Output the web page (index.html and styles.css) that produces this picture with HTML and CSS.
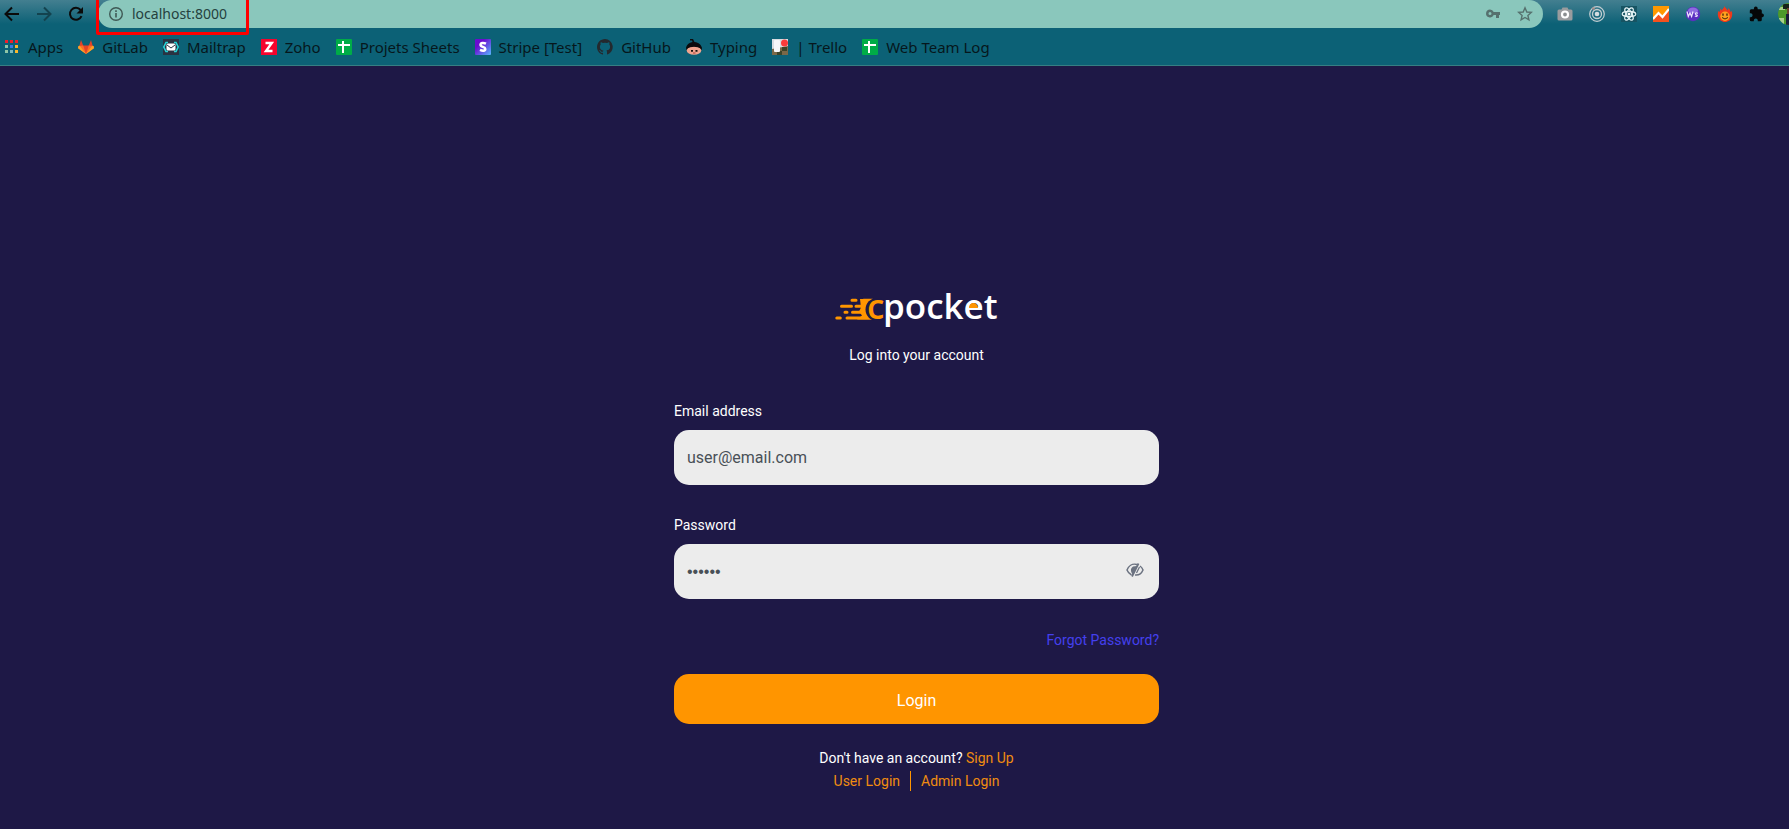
FILE: index.html
```html
<!DOCTYPE html>
<html lang="en">
<head>
<meta charset="utf-8">
<meta name="viewport" content="width=device-width, initial-scale=1">
<title>cpocket – Login</title>
<link rel="stylesheet" href="styles.css">
</head>
<body>
<header class="browser">
  <div class="toolbar">
    <nav class="nav-buttons" aria-label="History">
      <button class="icon-button" type="button" aria-label="Back"><svg viewBox="0 0 16 16"><path d="M15 8H2M8 1.500 1.500 8 8 14.500" fill="none" stroke="#0a0a0a" stroke-width="2"/></svg></button>
      <button class="icon-button" type="button" aria-label="Forward"><svg viewBox="0 0 16 16"><path d="M1 8h13M8 1.500 14.500 8 8 14.500" fill="none" stroke="#13434f" stroke-width="2"/></svg></button>
      <button class="icon-button" type="button" aria-label="Reload"><svg viewBox="0 0 16 16"><path d="M13.500 10.200A6 6 0 1 1 12.600 4" fill="none" stroke="#0a0a0a" stroke-width="2"/><path d="M15 1v6.500H8.500z" fill="#0a0a0a"/></svg></button>
    </nav>
    <div class="omnibox">
      <svg class="icon" viewBox="0 0 16 16"><circle cx="8" cy="8" r="6.300" fill="none" stroke="#3f5955" stroke-width="1.400"/><path d="M8 7v4.500M8 4.300v1.600" stroke="#3f5955" stroke-width="1.600"/></svg>
      <input class="address" type="text" value="localhost:8000" aria-label="Address">
      <span class="omnibox-actions">
        <button class="icon-button" type="button" aria-label="Saved passwords"><svg viewBox="0 0 16 16"><path fill="#56716e" fill-rule="evenodd" d="M5 3.500a4 4 0 1 0 3.700 5.600H11V12h3V9.100h1V6H8.700A4 4 0 0 0 5 3.500zM5 6a1.500 1.500 0 1 1 0 3 1.500 1.500 0 0 1 0-3z"/></svg></button>
        <button class="icon-button" type="button" aria-label="Bookmark"><svg viewBox="0 0 16 16"><path d="M8 1.800 9.800 6l4.500.4-3.400 3 1 4.500L8 11.500l-3.900 2.400 1-4.500-3.400-3L6.200 6z" fill="none" stroke="#56716e" stroke-width="1.400"/></svg></button>
      </span>
    </div>
    <div class="extensions">
      <button class="icon-button" type="button" aria-label="Screenshot"><svg viewBox="0 0 16 16"><path d="M2 3.500h2.500l1-2h5l1 2H14q1.500 0 1.500 1.500v8q0 1.500-1.500 1.500H2Q.5 14.500.5 13V5Q.5 3.500 2 3.500z" fill="#9a9c9e"/><circle cx="8" cy="8.500" r="3" fill="#8b8f91" stroke="#fff" stroke-width="2.200"/></svg></button>
      <button class="icon-button" type="button" aria-label="Radar"><svg viewBox="0 0 16 16"><circle cx="8" cy="8" r="7.300" fill="none" stroke="#c3ced2" stroke-width="1.200"/><circle cx="8" cy="8" r="4.500" fill="none" stroke="#c3ced2" stroke-width="1.300"/><circle cx="8" cy="8" r="2.300" fill="#d5dde0"/><circle cx="4.500" cy="2.500" r="1.300" fill="#a98c86"/></svg></button>
      <button class="icon-button" type="button" aria-label="React tools"><svg viewBox="0 0 16 16"><path fill="#175463" d="M0 0h16v16H0z"/><g fill="none" stroke="#e6f3f5" stroke-width="1.200"><ellipse cx="8" cy="8" rx="6.800" ry="2.700"/><ellipse cx="8" cy="8" rx="6.800" ry="2.700" transform="rotate(60 8 8)"/><ellipse cx="8" cy="8" rx="6.800" ry="2.700" transform="rotate(120 8 8)"/></g><circle cx="8" cy="8" r="1.500" fill="#fff"/></svg></button>
      <button class="icon-button" type="button" aria-label="Analytics"><svg viewBox="0 0 16 16"><path fill="#ff9800" d="M0 0h16v16H0z"/><path fill="#f4511e" d="m0 14 6-6 4 3 6-8v13H0z"/><path d="m0 13 5.500-6 4 4L16 3" fill="none" stroke="#fff" stroke-width="2.200"/></svg></button>
      <button class="icon-button" type="button" aria-label="Web sockets"><svg viewBox="0 0 16 16"><circle cx="8" cy="8" r="7.200" fill="#5b2fc0"/><ellipse cx="8" cy="4.500" rx="5" ry="3" fill="#8e6be0"/><path d="m2 5.500 1.300 5L5 7l1.600 3.500 1.400-5M13 7.300c-2.500-1-3.500.8-1.800 1.400 2 .6 1.200 2.300-1.400 1.300" fill="none" stroke="#eee8ff" stroke-width="1.200"/></svg></button>
      <button class="icon-button" type="button" aria-label="Flame"><svg viewBox="0 0 16 16"><path fill="#f0391a" d="M7.500 0c.5 2 2.500 2.500 3.200 4.500.6-.8.800-1.700.6-2.500 1.500 1.200 2 2.500 2 4l1.200-1c.8 1.800.9 3.500.5 5C14.200 13.800 11.500 16 8 16s-6.200-2.200-7-6c-.3-1.600-.2-3.200.5-5l1.300 1C2.800 4.500 3.200 3.500 4 2.500c0 .8.200 1.400.6 2C5.300 3 7.200 2.300 7.500 0z"/><circle cx="8" cy="10.300" r="4.700" fill="#ffa01e"/><path d="M6 7.500v2.200M10 7.500v2.200" stroke="#44220c" stroke-width="1.300"/><path d="M5 11.500q3 3 6 0" fill="none" stroke="#44220c"/></svg></button>
      <button class="icon-button" type="button" aria-label="Extensions"><svg viewBox="0 0 16 16"><path fill="#050708" d="M13.500 7.500h-.7V4.700q0-1.500-1.500-1.500H8.700V2.400a1.900 1.900 0 0 0-3.800 0v.8H2.200Q.8 3.200.8 4.700v2.600h.8a2 2 0 0 1 0 4H.8v2.500q0 1.500 1.400 1.500h2.600v-.8a2 2 0 0 1 4 0v.8h2.500q1.500 0 1.500-1.500v-2.600h.7a1.900 1.900 0 0 0 0-3.700z"/></svg></button>
      <button class="icon-button avatar" type="button" aria-label="Profile"><svg viewBox="0 0 22 22"><defs><clipPath id="round"><circle cx="11" cy="11" r="11"/></clipPath></defs><g clip-path="url(#round)"><path fill="#4d9a2a" d="M0 0h22v22H0z"/><path fill="#a9cf8c" d="M0 4h7v3H0zM0 15h6v7H0z"/><path fill="#17241a" d="M5 1h17v5H5z"/><path fill="#6e4432" d="M9 5h6v6H9z"/><path fill="#1b1f3b" d="M8 11h14v11H8z"/></g></svg></button>
    </div>
    <div class="callout"></div>
  </div>
  <nav class="bookmarks" aria-label="Bookmarks">
    <a class="bookmark" href="#"><svg class="icon" viewBox="0 0 16 16"><path fill="#f0202c" d="M1 1h3v3H1zM6 1h3v3H6zM11 1h3v3h-3z"/><path fill="#8fc6a6" d="M1 6h3v3H1zM1 11h3v3H1z"/><path fill="#3b78e7" d="M6 6h3v3H6z"/><path fill="#fbb82c" d="M11 6h3v3h-3zM11 11h3v3h-3z"/><path fill="#79b8bc" d="M6 11h3v3H6z"/></svg>Apps</a>
    <a class="bookmark" href="#"><svg class="icon" viewBox="0 0 16 16"><path fill="#e24329" d="M3 1 1 8l7 7 7-7-2-7-2.200 5.500H5.200z"/><path fill="#fc6d26" d="m.5 7 4.700-.5L8 15 0 9zM15.500 7l-4.700-.5L8 15l8-6z"/><path fill="#fca326" d="M.5 7 0 9.200 8 15 1.700 6.800zM15.500 7l.5 2.200L8 15l6.300-8.200z"/></svg>GitLab</a>
    <a class="bookmark" href="#"><svg class="icon" viewBox="0 0 16 16"><path fill="#293342" d="M0 0h16v16H0z"/><path d="M5 3.500H3L.8 8 3 12.500h2M11 3.500h2L15.200 8 13 12.500h-2" fill="none" stroke="#27d5d8" stroke-width="1.600"/><rect x="3.500" y="4.500" width="9" height="7" rx="1.500" fill="#fff"/><path d="m4 6 4 3 4-3" fill="none" stroke="#293342"/></svg>Mailtrap</a>
    <a class="bookmark" href="#"><svg class="icon" viewBox="0 0 16 16"><path fill="#f5042d" d="M0 0h16v16H0z"/><path d="M4.500 4h6.300L5 12h6.500" fill="none" stroke="#fff" stroke-width="2.400"/></svg>Zoho</a>
    <a class="bookmark" href="#"><svg class="icon" viewBox="0 0 16 16"><rect width="16" height="16" rx="1" fill="#00ac47"/><path d="M2 6h12M7 2v12" stroke="#fff" stroke-width="2"/></svg>Projets Sheets</a>
    <a class="bookmark" href="#"><svg class="icon" viewBox="0 0 16 16"><defs><linearGradient id="stripe" x2="1" y2="1"><stop offset=".3" stop-color="#6a0bd0"/><stop offset="1" stop-color="#58b8ff"/></linearGradient></defs><rect width="16" height="16" rx="1" fill="url(#stripe)"/><path d="M11 4.600C8.800 3.600 5.500 3.400 5.500 5.800c0 2.500 4.800 1.700 4.800 4.100 0 2.300-3 2.100-5.300 1" fill="none" stroke="#fff" stroke-width="2.500"/></svg>Stripe [Test]</a>
    <a class="bookmark" href="#"><svg class="icon" viewBox="0 0 16 16"><path fill="#24292e" d="M8 0C3.600 0 0 3.600 0 8c0 3.500 2.300 6.500 5.500 7.600.4.100.5-.2.500-.4v-1.400c-2.200.5-2.700-1-2.700-1-.4-.9-.9-1.200-.9-1.200-.7-.5.100-.5.100-.5.800.1 1.200.8 1.200.8.700 1.300 1.900.9 2.300.7.100-.5.300-.9.500-1.100-1.800-.2-3.600-.9-3.600-4 0-.9.300-1.600.8-2.100-.1-.2-.4-1 .1-2.100 0 0 .7-.2 2.200.8a7.500 7.500 0 0 1 4 0c1.500-1 2.200-.8 2.200-.8.400 1.100.2 1.900.1 2.100.5.600.8 1.300.8 2.100 0 3.100-1.900 3.700-3.700 3.900.3.300.6.800.6 1.500v2.200c0 .2.100.5.500.4A8 8 0 0 0 8 0z"/></svg>GitHub</a>
    <a class="bookmark" href="#"><svg class="icon" viewBox="0 0 16 16"><path fill="#0b0b0d" d="M4 0h3l1.500 3C13 3.300 15 6 16 9l-1 3H1L0 9c.5-3 3-5.500 6.500-6L6 1.500H4z"/><ellipse cx="8" cy="11.500" rx="7.300" ry="4.300" fill="#f0a48e"/><path fill="#0b0b0d" d="M.5 9.500Q8 6 15.500 9.500L15 7 8 5 1 7z"/><path d="M5 11.800h2M9.500 11.800h2" stroke="#17110f" stroke-width="1.800"/><path d="M7 14h2.500" stroke="#a83f39"/></svg>Typing</a>
    <a class="bookmark" href="#"><svg class="icon" viewBox="0 0 16 16"><path fill="#d9dde2" d="M0 0h16v16H0z"/><path fill="#7a6848" d="M0 10 16 7v9H0z"/><path fill="#3c4429" d="M5 12h5v4H5zM10 8h5v4h-5z"/><rect x="2" y="1" width="6" height="12" rx="1" fill="#f7f7f9"/><circle cx="12.500" cy="4" r="3.500" fill="#fb3b3b"/></svg>| Trello</a>
    <a class="bookmark" href="#"><svg class="icon" viewBox="0 0 16 16"><rect width="16" height="16" rx="1" fill="#00ac47"/><path d="M2 6h12M7 2v12" stroke="#fff" stroke-width="2"/></svg>Web Team Log</a>
  </nav>
</header>
<main class="page">
  <form class="login">
    <svg class="logo" viewBox="0 -10 164 50" role="img" aria-label="cpocket">
      <g stroke="#ff9500" stroke-width="3" stroke-linecap="round">
        <path d="M17 10.300h4M28.500 10.300h9M6.500 16.300h10M21 16.300h12M10 22.300h2M17.500 22.300h14M1.800 28h3.500M12 28h26"/>
      </g>
      <path fill="#ff9500" d="M25 9h13v20.500H22l5-4-3-4 2-4z"/>
      <circle cx="42" cy="19.500" r="11.500" fill="#1e1846"/>
      <text class="logo-text logo-c" x="32" y="29">c</text>
      <text class="logo-text" x="48" y="29">pocket</text>
      <path fill="#ff9500" d="M134 18a4.500 5 0 0 1 9 0z"/>
    </svg>
    <p class="subtitle">Log into your account</p>
    <label class="label" for="email">Email address</label>
    <input class="field" id="email" type="email" value="user@email.com">
    <label class="label" for="password">Password</label>
    <div class="password">
      <input class="field secret" id="password" type="password" value="secret">
      <button class="icon-button reveal" type="button" aria-label="Show password"><svg viewBox="0 0 18 16"><path d="M11 2.500C6 1 2.500 4.500 1 8c1 2.500 2.500 4 4.500 5M14 4c1.500 1 2.500 2.500 3 4-1.500 3.500-4.500 5.500-8 5" fill="none" stroke="#6b7280" stroke-width="1.500"/><path d="M12.500 1.500 6 14.500" stroke="#6b7280" stroke-width="1.800"/><path fill="#6b7280" d="M11 4 6.500 12.500Q3 7 7 4.500z"/><path d="M13.500 5 10.500 11" stroke="#6b7280" stroke-width="1.200"/></svg></button>
    </div>
    <a class="forgot" href="#">Forgot Password?</a>
    <button class="submit" type="submit">Login</button>
    <p class="signup">Don't have an account? <a href="#">Sign Up</a></p>
    <p class="roles"><a href="#">User Login</a><a href="#">Admin Login</a></p>
  </form>
</main>
</body>
</html>
```
FILE: styles.css
```css
* { box-sizing: border-box; }

body {
  margin: 0;
  min-height: 100vh;
  display: flex;
  flex-direction: column;
  background: #1e1846;
  color: #fff;
  font-family: Roboto, "Liberation Sans", sans-serif;
  font-size: 14px;
  line-height: 20px;
  overflow-x: hidden;
}

p { margin: 0; }
a { text-decoration: none; }
svg { display: block; }

.icon { width: 16px; height: 16px; flex: none; }

.icon-button {
  flex: none;
  width: 16px;
  height: 16px;
  padding: 0;
  border: 0;
  background: none;
}
.icon-button svg { width: 100%; height: 100%; }

.browser {
  background: #0c6176;
  border-bottom: 1px solid #367e83;
  font-family: "Noto Sans", sans-serif;
}

.toolbar {
  position: relative;
  display: flex;
  align-items: center;
  height: 28px;
  padding-left: 4px;
  background: linear-gradient(#437f90, #0c6176 24px);
}

.nav-buttons { display: flex; gap: 16px; padding-right: 14px; }

.omnibox {
  flex: 1;
  display: flex;
  align-items: center;
  gap: 8px;
  height: 28px;
  padding: 0 10px;
  border-radius: 14px;
  background: #8ac7bc;
}

.address {
  flex: 1;
  min-width: 0;
  padding: 0;
  border: 0;
  background: none;
  color: #24413e;
  font: 14px/20px "Noto Sans", sans-serif;
}

.omnibox-actions { display: flex; gap: 16px; }

.extensions {
  display: flex;
  align-items: center;
  gap: 16px;
  padding-left: 14px;
  width: 246px;
  overflow: hidden;
}

.avatar { width: 22px; height: 22px; margin-left: -3px; }

.callout {
  position: absolute;
  left: 96px;
  top: -4px;
  width: 153px;
  height: 39px;
  border: 3px solid #fe0000;
  border-radius: 2px;
  pointer-events: none;
}

.bookmarks {
  display: flex;
  align-items: center;
  gap: 15px;
  height: 37px;
  padding-left: 4px;
}

.bookmark {
  display: flex;
  align-items: center;
  gap: 8px;
  color: #06171c;
  font-size: 15px;
  white-space: nowrap;
}

.page {
  flex: 1;
  display: flex;
  justify-content: center;
  padding: 214px 0 32px 44px;
}

.login {
  width: 485px;
  max-width: 100%;
  display: flex;
  flex-direction: column;
}

.logo { width: 164px; height: 50px; align-self: center; overflow: visible; }
.logo-text {
  font-family: "Open Sans", "Noto Sans", sans-serif;
  font-size: 35px;
  font-weight: 600;
  fill: #fff;
}
.logo-c { fill: #ff9500; }

.subtitle { margin-top: 15px; text-align: center; }
.label { margin-top: 36px; margin-bottom: 9px; }
.field + .label { margin-top: 30px; }

.field {
  width: 100%;
  height: 55px;
  padding: 0 13px;
  border: 0;
  border-radius: 15px;
  background: #ececec;
  color: #495057;
  font: 16px/24px Roboto, "Liberation Sans", sans-serif;
}
.secret { font-family: "Liberation Sans", sans-serif; }

.password { position: relative; }
.reveal {
  position: absolute;
  right: 15px;
  top: 18px;
  width: 18px;
}

.forgot { align-self: flex-end; margin: 31px 0 24px; color: #4440ee; }

.submit {
  height: 50px;
  padding: 4px 0 0;
  border: 0;
  border-radius: 15px;
  background: #ff9500;
  color: #fff;
  font: 16px/24px Roboto, "Liberation Sans", sans-serif;
}

.signup { margin-top: 24px; text-align: center; }
.signup a, .roles a { color: #f08c10; }

.roles { display: flex; justify-content: center; margin-top: 3px; }
.roles a { padding: 0 10px; }
.roles a + a { border-left: 1px solid #ff9500; }
```
